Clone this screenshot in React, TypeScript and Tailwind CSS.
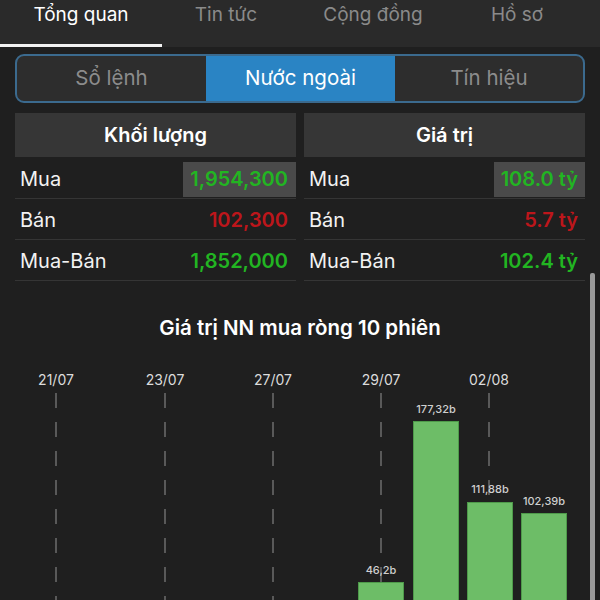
import React from "react";

const tabs = [
  { label: "Tổng quan", w: "w-[162px]", active: true },
  { label: "Tin tức", w: "w-[128px]", active: false },
  { label: "Cộng đồng", w: "w-[166px]", active: false },
  { label: "Hồ sơ", w: "w-[122px]", active: false },
];

type Row = { label: string; value: string; color: string; hl?: boolean };

function Panel({ title, rows, pr }: { title: string; rows: Row[]; pr: string }) {
  return (
    <div className="flex flex-col">
      <div className="h-[44px] bg-[#363636] flex items-center justify-center text-[20px] font-semibold text-white">
        {title}
      </div>
      {rows.map((r, i) => (
        <div
          key={i}
          className={`flex items-center justify-between border-b border-[#353535] ${i === 0 ? "h-[42px] pt-[3px]" : "h-[41px] pt-[1px]"}`}
        >
          <span className="pl-[5px] text-[20px] text-[#f2f2f2]">{r.label}</span>
          {r.hl ? (
            <span className={`h-[35px] flex items-center bg-[#4a4a4a] pl-[7px] ${pr} text-[20px] font-semibold ${r.color}`}>
              {r.value}
            </span>
          ) : (
            <span className={`${pr} text-[20px] font-semibold ${r.color}`}>{r.value}</span>
          )}
        </div>
      ))}
    </div>
  );
}

const dates = [
  { x: 56, t: "21/07" },
  { x: 165, t: "23/07" },
  { x: 273, t: "27/07" },
  { x: 381, t: "29/07" },
  { x: 489, t: "02/08" },
];

const bars = [
  { x: 358, top: 222, label: "46,2b", ly: 214 },
  { x: 413, top: 61, label: "177,32b", ly: 53 },
  { x: 467, top: 142, label: "111,88b", ly: 133 },
  { x: 521, top: 153, label: "102,39b", ly: 145 },
];

export default function App() {
  return (
    <div
      className="relative w-[600px] h-[600px] overflow-hidden bg-[#1f1f1f]"
      style={{ fontFamily: "Inter, 'Noto Sans', sans-serif" }}
    >
      {/* top tabs */}
      <div className="h-[47px] bg-[#2a2a2a] flex">
        {tabs.map((t) => (
          <div key={t.label} className={`${t.w} flex flex-col`}>
            <div
              className={`h-[44px] flex justify-center pt-[2px] text-[19px] leading-[26px] ${t.active ? "text-white" : "text-[#8a8a8a]"}`}
            >
              {t.label}
            </div>
            <div className={`h-[3px] ${t.active ? "bg-[#f2f2f2]" : ""}`} />
          </div>
        ))}
      </div>

      {/* segmented control */}
      <div className="px-[15px] pt-[7px]">
        <div className="h-[49px] rounded-[9px] border-2 border-[#3b6a8e] overflow-hidden flex bg-[#2d2d2d]">
          <div className="w-[189px] flex items-center justify-center text-[20.5px] text-[#8c8c8c]">Sổ lệnh</div>
          <div className="w-[189px] flex items-center justify-center text-[20.5px] text-white bg-[#2a84c4]">Nước ngoài</div>
          <div className="flex-1 flex items-center justify-center text-[20.5px] text-[#8c8c8c]">Tín hiệu</div>
        </div>
      </div>

      {/* tables */}
      <div className="px-[15px] pt-[10px] grid grid-cols-2 gap-x-[8px]">
        <Panel
          title="Khối lượng"
          pr="pr-[8px]"
          rows={[
            { label: "Mua", value: "1,954,300", color: "text-[#22b522]", hl: true },
            { label: "Bán", value: "102,300", color: "text-[#bd161b]" },
            { label: "Mua-Bán", value: "1,852,000", color: "text-[#22b522]" },
          ]}
        />
        <Panel
          title="Giá trị"
          pr="pr-[7px]"
          rows={[
            { label: "Mua", value: "108.0 tỷ", color: "text-[#22b522]", hl: true },
            { label: "Bán", value: "5.7 tỷ", color: "text-[#bd161b]" },
            { label: "Mua-Bán", value: "102.4 tỷ", color: "text-[#22b522]" },
          ]}
        />
      </div>

      {/* chart title */}
      <div className="pt-[34px] text-center text-[20.5px] leading-[26px] font-semibold text-white">
        Giá trị NN mua ròng 10 phiên
      </div>

      {/* chart */}
      <svg className="mt-[19px] block" width={600} height={240} viewBox="0 0 600 240">
        {dates.map((d) => (
          <g key={d.t}>
            <text x={d.x} y={25} textAnchor="middle" fontSize={14} fill="#dcdcdc" fontFamily="Inter, sans-serif">
              {d.t}
            </text>
            <line x1={d.x} y1={33} x2={d.x} y2={240} stroke="#6e6e6e" strokeWidth={1.5} strokeDasharray="15 14" />
          </g>
        ))}
        {bars.map((b) => (
          <g key={b.label}>
            <rect x={b.x + 0.5} y={b.top + 0.5} width={45} height={240 - b.top} fill="#6dbd67" stroke="#4e9a4a" strokeWidth={1} />
            <text x={b.x + 23} y={b.ly} textAnchor="middle" fontSize={11} fontWeight={500} fill="#cfcfcf" fontFamily="Inter, sans-serif">
              {b.label}
            </text>
          </g>
        ))}
      </svg>

      {/* scrollbar */}
      <div className="absolute left-[590px] top-[273px] w-[5px] h-[327px] bg-[#9a9a9a] rounded-t-[2px]" />
    </div>
  );
}
